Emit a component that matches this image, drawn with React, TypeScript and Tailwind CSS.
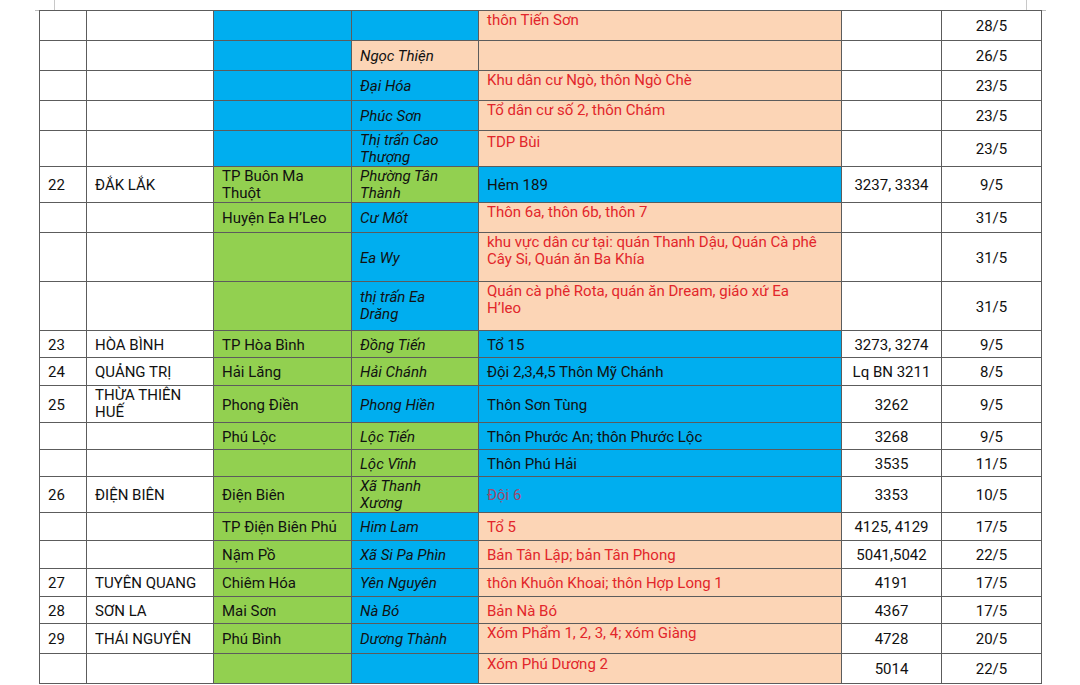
import type { ReactNode } from 'react';

type Bg = 'w' | 'b' | 'g' | 'p';
type Cell = {
  t?: string;
  bg?: Bg;
  it?: boolean;
  red?: boolean;
  dim?: boolean;
  top?: boolean;
  pt?: string;
};

const BG: Record<Bg, string> = {
  w: 'bg-white',
  b: 'bg-[#00aeef]',
  g: 'bg-[#92d050]',
  p: 'bg-[#fcd5b6]',
};

// columns: stt, tỉnh, huyện, xã, địa điểm, bệnh nhân, ngày
const W = ['w-[47px]', 'w-[127px]', 'w-[138px]', 'w-[127px]', 'w-[363px]', 'w-[100px]', 'w-[100px]'];

const e = (bg: Bg = 'w'): Cell => ({ bg });

const rows: { h: string; cells: Cell[] }[] = [
  { h: 'h-[30px]', cells: [e(), e(), e('b'), e('b'), { t: 'thôn Tiến Sơn', bg: 'p', red: true, top: true }, e(), { t: '28/5' }] },
  { h: 'h-[30px]', cells: [e(), e(), e('b'), { t: 'Ngọc Thiện', bg: 'p', it: true }, e('p'), e(), { t: '26/5' }] },
  { h: 'h-[30px]', cells: [e(), e(), e('b'), { t: 'Đại Hóa', bg: 'b', it: true }, { t: 'Khu dân cư Ngò, thôn Ngò Chè', bg: 'p', red: true, top: true }, e(), { t: '23/5' }] },
  { h: 'h-[30px]', cells: [e(), e(), e('b'), { t: 'Phúc Sơn', bg: 'b', it: true }, { t: 'Tổ dân cư số 2, thôn Chám', bg: 'p', red: true, top: true }, e(), { t: '23/5' }] },
  { h: 'h-[36px]', cells: [e(), e(), e('b'), { t: 'Thị trấn Cao|Thượng', bg: 'b', it: true }, { t: 'TDP Bùi', bg: 'p', red: true, top: true, pt: 'pt-[3px]' }, e(), { t: '23/5' }] },
  { h: 'h-[36px]', cells: [{ t: '22' }, { t: 'ĐẮK LẮK' }, { t: 'TP Buôn Ma|Thuột', bg: 'g' }, { t: 'Phường Tân|Thành', bg: 'g', it: true }, { t: 'Hẻm 189', bg: 'b' }, { t: '3237, 3334' }, { t: '9/5' }] },
  { h: 'h-[30px]', cells: [e(), e(), { t: 'Huyện Ea H’Leo', bg: 'g' }, { t: 'Cư Mốt', bg: 'b', it: true }, { t: 'Thôn 6a, thôn 6b, thôn 7', bg: 'p', red: true, top: true }, e(), { t: '31/5' }] },
  { h: 'h-[49px]', cells: [e(), e(), e('g'), { t: 'Ea Wy', bg: 'b', it: true }, { t: 'khu vực dân cư tại: quán Thanh Dậu, Quán Cà phê|Cây Si, Quán ăn Ba Khía', bg: 'p', red: true, top: true }, e(), { t: '31/5' }] },
  { h: 'h-[49px]', cells: [e(), e(), e('g'), { t: 'thị trấn Ea|Drăng', bg: 'b', it: true }, { t: 'Quán cà phê Rota, quán ăn Dream, giáo xứ Ea|H’leo', bg: 'p', red: true, top: true }, e(), { t: '31/5' }] },
  { h: 'h-[27px]', cells: [{ t: '23' }, { t: 'HÒA BÌNH' }, { t: 'TP Hòa Bình', bg: 'g' }, { t: 'Đồng Tiến', bg: 'g', it: true }, { t: 'Tổ 15', bg: 'b' }, { t: '3273, 3274' }, { t: '9/5' }] },
  { h: 'h-[28px]', cells: [{ t: '24' }, { t: 'QUẢNG TRỊ' }, { t: 'Hải Lăng', bg: 'g' }, { t: 'Hải Chánh', bg: 'g', it: true }, { t: 'Đội 2,3,4,5 Thôn Mỹ Chánh', bg: 'b' }, { t: 'Lq BN 3211' }, { t: '8/5' }] },
  { h: 'h-[37px]', cells: [{ t: '25' }, { t: 'THỪA THIÊN|HUẾ' }, { t: 'Phong Điền', bg: 'g' }, { t: 'Phong Hiền', bg: 'b', it: true }, { t: 'Thôn Sơn Tùng', bg: 'b' }, { t: '3262' }, { t: '9/5' }] },
  { h: 'h-[27px]', cells: [e(), e(), { t: 'Phú Lộc', bg: 'g' }, { t: 'Lộc Tiến', bg: 'g', it: true }, { t: 'Thôn Phước An; thôn Phước Lộc', bg: 'b' }, { t: '3268' }, { t: '9/5' }] },
  { h: 'h-[27px]', cells: [e(), e(), e('g'), { t: 'Lộc Vĩnh', bg: 'g', it: true }, { t: 'Thôn Phú Hải', bg: 'b' }, { t: '3535' }, { t: '11/5' }] },
  { h: 'h-[36px]', cells: [{ t: '26' }, { t: 'ĐIỆN BIÊN' }, { t: 'Điện Biên', bg: 'g' }, { t: 'Xã Thanh|Xương', bg: 'g', it: true }, { t: 'Đội 6', bg: 'b', dim: true }, { t: '3353' }, { t: '10/5' }] },
  { h: 'h-[28px]', cells: [e(), e(), { t: 'TP Điện Biên Phủ', bg: 'g' }, { t: 'Him Lam', bg: 'b', it: true }, { t: 'Tổ 5', bg: 'p', red: true }, { t: '4125, 4129' }, { t: '17/5' }] },
  { h: 'h-[28px]', cells: [e(), e(), { t: 'Nậm Pồ', bg: 'g' }, { t: 'Xã Si Pa Phìn', bg: 'b', it: true }, { t: 'Bản Tân Lập; bản Tân Phong', bg: 'p', red: true }, { t: '5041,5042' }, { t: '22/5' }] },
  { h: 'h-[28px]', cells: [{ t: '27' }, { t: 'TUYÊN QUANG' }, { t: 'Chiêm Hóa', bg: 'g' }, { t: 'Yên Nguyên', bg: 'b', it: true }, { t: 'thôn Khuôn Khoai; thôn Hợp Long 1', bg: 'p', red: true }, { t: '4191' }, { t: '17/5' }] },
  { h: 'h-[27px]', cells: [{ t: '28' }, { t: 'SƠN LA' }, { t: 'Mai Sơn', bg: 'g' }, { t: 'Nà Bó', bg: 'b', it: true }, { t: 'Bản Nà Bó', bg: 'p', red: true }, { t: '4367' }, { t: '17/5' }] },
  { h: 'h-[30px]', cells: [{ t: '29' }, { t: 'THÁI NGUYÊN' }, { t: 'Phú Bình', bg: 'g' }, { t: 'Dương Thành', bg: 'b', it: true }, { t: 'Xóm Phẩm 1, 2, 3, 4; xóm Giàng', bg: 'p', red: true, top: true }, { t: '4728' }, { t: '20/5' }] },
  { h: 'h-[30px]', cells: [e(), e(), e('g'), e('b'), { t: 'Xóm Phú Dương 2', bg: 'p', red: true, top: true, pt: 'pt-[2px]' }, { t: '5014' }, { t: '22/5' }] },
];

function lines(t: string): ReactNode {
  const parts = t.split('|');
  return parts.map((p, i) => (
    <span key={i}>
      {p}
      {i < parts.length - 1 && <br />}
    </span>
  ));
}

function valign(c: Cell) {
  if (c.top) return `align-top ${c.pt ?? 'pt-px'}`;
  // single lines sit a hair below the middle in the source document
  if (c.t && !c.t.includes('|')) return 'align-middle pt-[2px]';
  return 'align-middle';
}

export default function App() {
  return (
    <div className="h-[685px] w-[1080px] overflow-hidden bg-white font-['Roboto',sans-serif] text-[15px] leading-[17px] text-[#111]">
      {/* page corner marks above the table */}
      <div className="flex h-[10px]">
        <div className="ml-[54px] w-px bg-[#c8c8c8]" />
        <div className="ml-[971px] w-px bg-[#c8c8c8]" />
      </div>
      <div className="flex">
        <div className="ml-[35px] h-px w-[4px] bg-[#bdbdbd]" />
        <table className="w-[1002px] table-fixed border-collapse border-t border-t-[#9a9a9a]">
          <colgroup>
            {W.map((w, i) => (
              <col key={i} className={w} />
            ))}
          </colgroup>
          <tbody>
            {rows.map((row, ri) => (
              <tr key={ri} className={row.h}>
                {row.cells.map((c, ci) => (
                  <td
                    key={ci}
                    className={[
                      'border border-[#5c5c5c] p-0 px-2 whitespace-nowrap',
                      ci === 1 ? 'border-l-[#a8a8a8]' : '',
                      BG[c.bg ?? 'w'],
                      valign(c),
                      ci >= 5 ? 'text-center' : 'text-left',
                      c.it ? 'italic' : '',
                      c.red ? 'text-[#e2262b]' : c.dim ? 'text-[#a2486c]' : '',
                    ].join(' ')}
                  >
                    {c.t ? lines(c.t) : null}
                  </td>
                ))}
              </tr>
            ))}
          </tbody>
        </table>
        <div className="h-px w-[4px] bg-[#bdbdbd]" />
      </div>
    </div>
  );
}
